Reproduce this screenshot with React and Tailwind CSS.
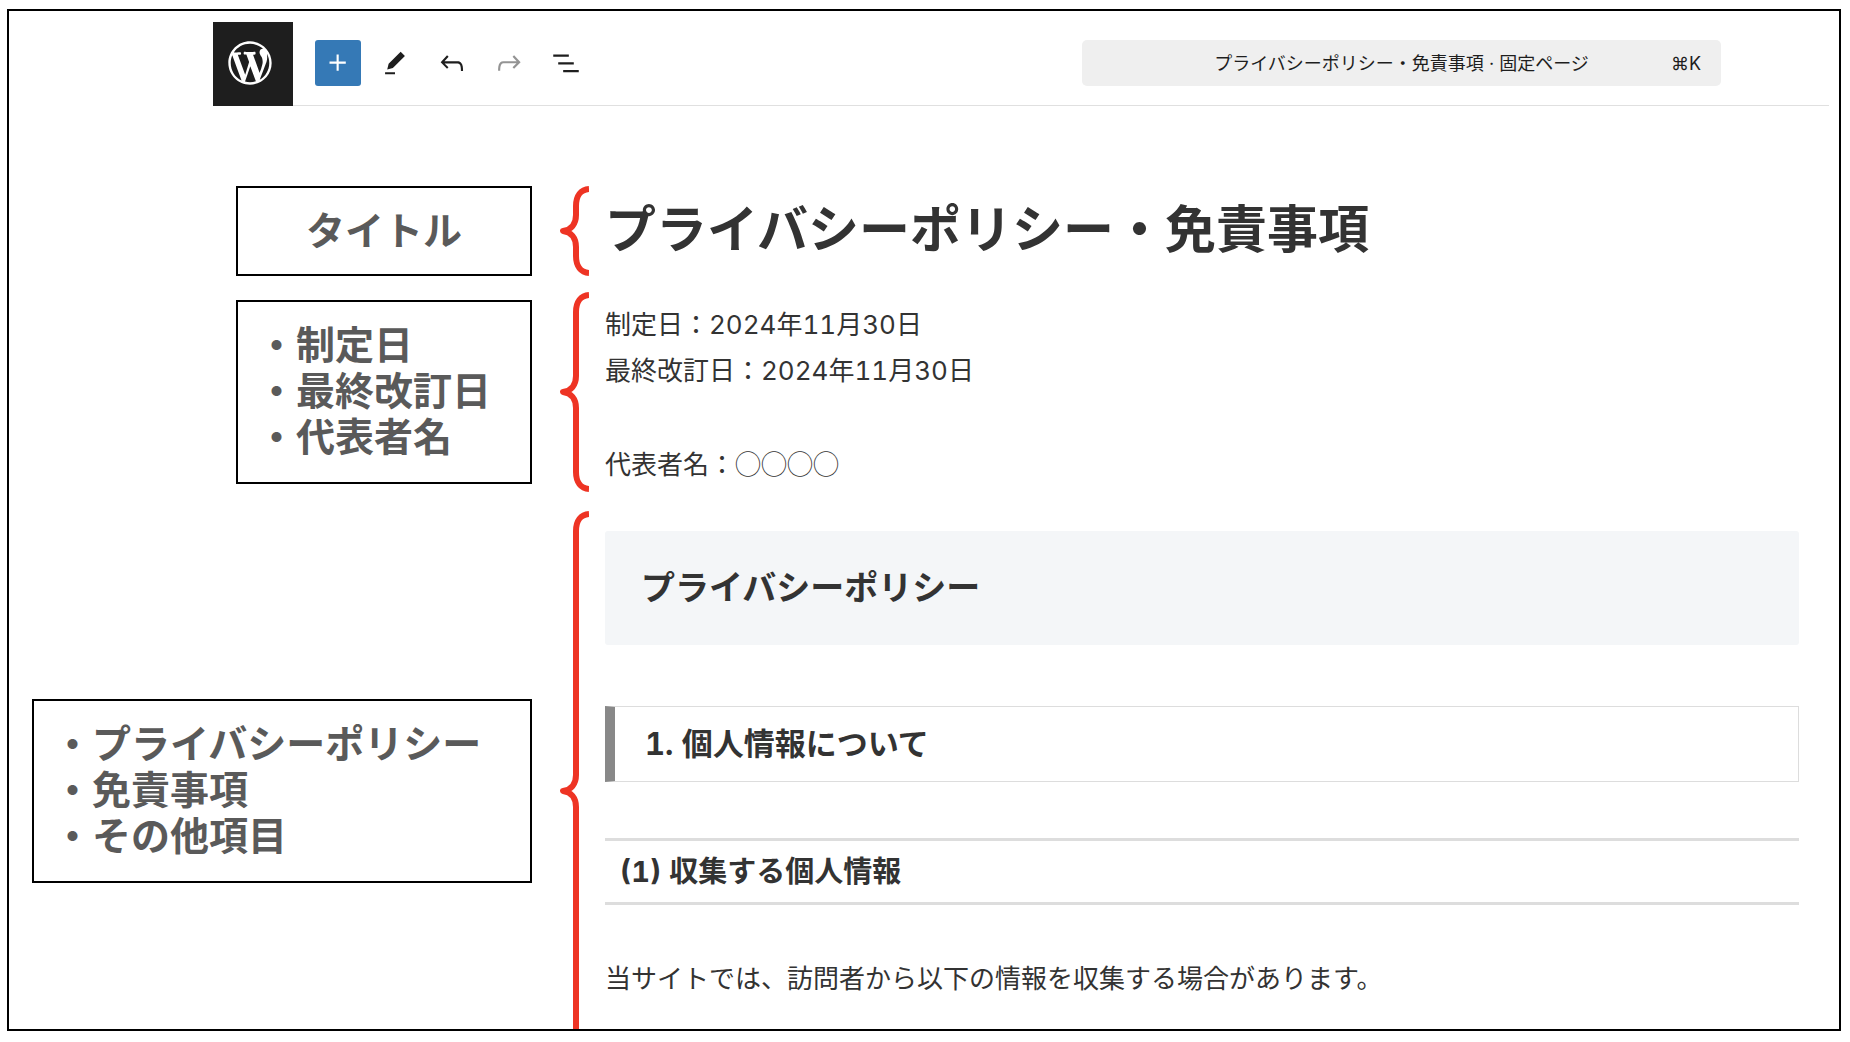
import React from 'react'

const toolbarButtons = [
  {
    label: 'ブロック挿入ツール',
    className: 'bg-[#3579b6] text-white',
    path: 'M11 12.5V17.5H12.5V12.5H17.5V11H12.5V6H11V11H6V12.5H11Z'
  },
  {
    label: 'ツール',
    className: 'text-[#1e1e1e]',
    path: 'm19 7-3-3-8.5 8.5-1 4 4-1L19 7Zm-7 11.5H5V20h7v-1.5Z'
  },
  {
    label: '元に戻す',
    className: 'text-[#1e1e1e]',
    path: 'M18.3 11.7c-.6-.6-1.4-.9-2.3-.9H6.7l2.9-3.3-1.1-1-4.5 5L8.5 16l1-1-2.7-2.7H16c.5 0 .9.2 1.3.5 1 1 1 3.4 1 4.5v.3h1.5v-.2c0-1.5 0-4.3-1.5-5.7z'
  },
  {
    label: 'やり直す',
    className: 'text-[#949494]',
    disabled: true,
    path: 'M15.6 6.5l-1.1 1 2.9 3.3H8c-.9 0-1.7.3-2.3.9-1.4 1.5-1.4 4.2-1.4 5.6v.2h1.5v-.3c0-1.1 0-3.5 1-4.5.3-.3.7-.5 1.3-.5h9.2L14.5 15l1.1 1.1 4.6-4.6-4.6-5z'
  },
  {
    label: 'ドキュメント概観',
    className: 'text-[#1e1e1e]',
    path: 'M3 6h11v1.5H3V6Zm3.5 5.5h11V13h-11v-1.5ZM21 17H10v1.5h11V17Z'
  }
]

function WordPressLogo() {
  return (
    <svg viewBox="-2 -2 24 24" className="size-[52px]" fill="currentColor" aria-hidden="true">
      <path d="M20 10c0-5.51-4.49-10-10-10C4.48 0 0 4.49 0 10c0 5.52 4.48 10 10 10 5.51 0 10-4.48 10-10zM7.78 15.37L4.37 6.22c.55-.02 1.17-.08 1.17-.08.5-.06.44-1.13-.06-1.11 0 0-1.45.11-2.37.11-.18 0-.37 0-.58-.01C4.12 2.69 6.87 1.11 10 1.11c2.33 0 4.45.87 6.05 2.34-.68-.11-1.65.39-1.65 1.58 0 .74.45 1.36.9 2.1.35.61.55 1.36.55 2.46 0 1.49-1.4 5-1.4 5l-3.03-8.37c.54-.02.82-.17.82-.17.5-.05.44-1.25-.06-1.22 0 0-1.44.12-2.38.12-.87 0-2.33-.12-2.33-.12-.5-.03-.56 1.2-.06 1.22l.92.08 1.26 3.41zM17.41 10c.24-.64.74-1.87.43-4.25.7 1.29 1.05 2.71 1.05 4.25 0 3.29-1.73 6.24-4.4 7.78.97-2.59 1.94-5.2 2.92-7.78zM6.1 18.09C3.12 16.65 1.11 13.53 1.11 10c0-1.3.23-2.48.72-3.59C3.25 10.3 4.67 14.2 6.1 18.09zm4.03-6.63l2.58 6.98c-.86.29-1.76.45-2.71.45-.79 0-1.57-.11-2.29-.33.81-2.38 1.62-4.74 2.42-7.1z" />
    </svg>
  )
}

// The stems stretch, the curled parts keep their size
function Brace({ open = false }) {
  return (
    <div className="flex flex-col h-full text-[#ee3424]">
      <svg className="w-full h-5 shrink-0" fill="none" stroke="currentColor" strokeWidth="6" aria-hidden="true">
        <path d="M29 3C21 3.5 16 10 16 20" />
      </svg>
      <div className={`w-1.5 ml-[13px] bg-current ${open ? 'h-[244px]' : 'flex-1'}`} />
      <svg className="w-full h-8 shrink-0" fill="none" stroke="currentColor" strokeWidth="6" strokeLinecap="round" strokeLinejoin="round" aria-hidden="true">
        <path d="M16 -3V0C16 9 11 15 3 16C11 17 16 23 16 32V35" />
      </svg>
      <div className="w-1.5 ml-[13px] bg-current flex-1" />
      {!open && (
        <svg className="w-full h-5 shrink-0" fill="none" stroke="currentColor" strokeWidth="6" aria-hidden="true">
          <path d="M29 17C21 16.5 16 10 16 0" />
        </svg>
      )}
    </div>
  )
}

function NoteList({ items, className }) {
  return (
    <ul className={`ml-auto border-2 border-black px-[19px] pt-5 pb-[22px] text-[39px] leading-[46px] font-bold text-[#5a5a5a] ${className}`}>
      {items.map((item) => (
        <li key={item}>・{item}</li>
      ))}
    </ul>
  )
}

function Section({ note, openBrace, children, className = '' }) {
  return (
    <section className={`grid grid-cols-[523px_29px_1fr] ${className}`}>
      {note}
      <div className="h-full w-[29px] ml-7">
        <Brace open={openBrace} />
      </div>
      <div className="ml-11">{children}</div>
    </section>
  )
}

export default function App() {
  return (
    <div
      lang="ja"
      className="min-h-screen flex bg-white pt-[9px] pb-[11px] pl-[7px] pr-[9px] font-['Inter','Noto_Sans_CJK_JP',sans-serif] text-[#333333]"
    >
      <div className="flex-1 flex flex-col border-2 border-black">
        {/* Editor toolbar */}
        <header className="flex items-start mt-[11px] ml-[204px] mr-2.5 shadow-[inset_0_-1px_0_#e0e0e0]">
          <a href="#" aria-label="投稿を表示" className="w-20 h-[84px] pt-[15px] pl-[11px] bg-[#1e1e1e] text-white">
            <WordPressLogo />
          </a>
          <div className="flex gap-[11px] mt-[18px] ml-[22px]">
            {toolbarButtons.map((button) => (
              <button
                key={button.label}
                type="button"
                aria-label={button.label}
                disabled={button.disabled}
                className={`flex items-center justify-center size-[46px] rounded-[3px] ${button.className}`}
              >
                <svg viewBox="0 0 24 24" className="size-[34px]" fill="currentColor" aria-hidden="true">
                  <path d={button.path} />
                </svg>
              </button>
            ))}
          </div>
          <button
            type="button"
            className="grid grid-cols-[1fr_auto_1fr] items-center w-[639px] h-[46px] mt-[18px] ml-auto mr-[108px] px-5 rounded-[5px] bg-[#efefef] text-[18px] text-[#1e1e1e]"
          >
            <span className="col-start-2">プライバシーポリシー・免責事項 · 固定ページ</span>
            <span className="text-right">⌘K</span>
          </button>
        </header>

        <main className="flex-1 flex flex-col pt-20 tabular-nums">
          <Section
            note={
              <p className="flex items-center justify-center w-[296px] h-[90px] ml-auto border-2 border-black text-[39px] leading-[46px] font-bold text-[#5a5a5a]">
                タイトル
              </p>
            }
          >
            <h1 className="pt-1.5 text-[51px] leading-[76px] font-bold">プライバシーポリシー・免責事項</h1>
          </Section>

          <Section
            className="mt-4 h-[200px] items-center"
            note={<NoteList className="w-[296px]" items={['制定日', '最終改訂日', '代表者名']} />}
          >
            <div className="pt-1 text-[26px] leading-[46px]">
              <p>
                制定日：2024年11月30日
                <br />
                最終改訂日：2024年11月30日
              </p>
              <p className="mt-[46px] font-['Noto_Sans_CJK_JP',sans-serif]">代表者名：◯◯◯◯</p>
            </div>
          </Section>

          <Section
            className="mt-[19px] flex-1"
            openBrace
            note={
              <NoteList
                className="w-[500px] mt-[188px] self-start"
                items={['プライバシーポリシー', '免責事項', 'その他項目']}
              />
            }
          >
            <div className="mr-10 pt-5">
              <h2 className="px-9 py-10 rounded-[3px] bg-[#f4f6f8] text-[34px] leading-[34px] font-bold">
                プライバシーポリシー
              </h2>
              <h3 className="mt-[61px] pl-[30px] py-[14px] border border-[#dddddd] border-l-10 border-l-[#888888] text-[31px] leading-[46px] font-bold">
                1. 個人情報について
              </h3>
              <h4 className="mt-14 px-[15px] py-2 border-y-3 border-[#dddddd] text-[29px] leading-[45px] font-bold">
                (1) 収集する個人情報
              </h4>
              <p className="mt-[51px] text-[26px] leading-[46px]">
                当サイトでは、訪問者から以下の情報を収集する場合があります。
              </p>
            </div>
          </Section>
        </main>
      </div>
    </div>
  )
}
